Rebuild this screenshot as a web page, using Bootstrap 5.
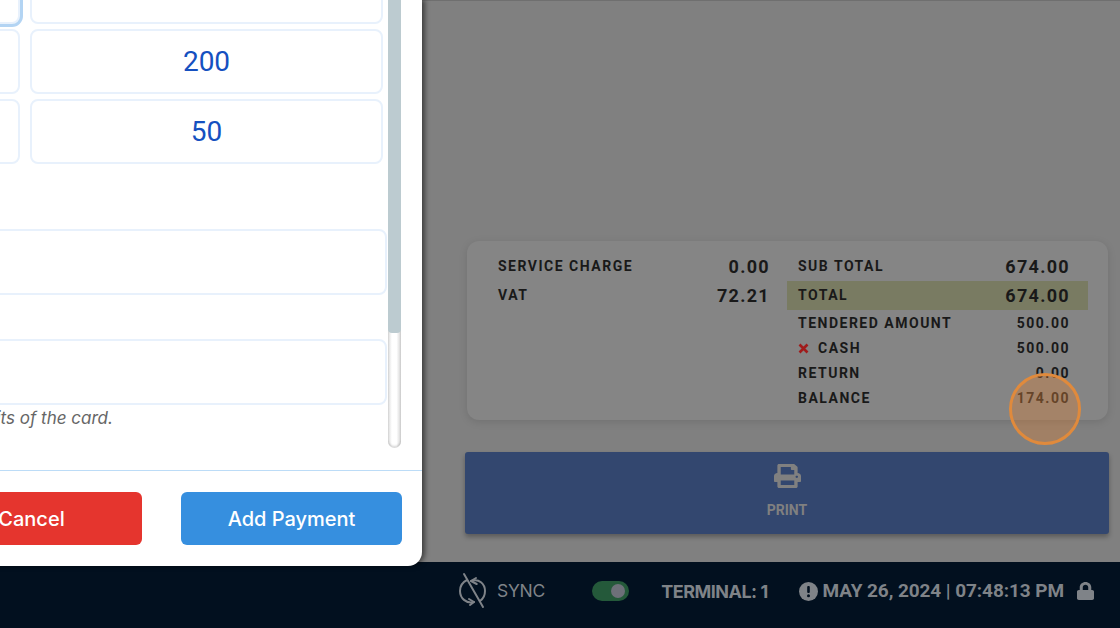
<!DOCTYPE html>
<html lang="en">
<head>
  <meta charset="UTF-8" />
  <meta name="viewport" content="width=device-width, initial-scale=1">
  <title>POS Payment</title>
  <link href="https://cdn.jsdelivr.net/npm/bootstrap@5.3.3/dist/css/bootstrap.min.css" rel="stylesheet">
  <style>
    html, body { height: 100%; overflow: hidden; }
    body { background: #808080; font-family: Roboto, sans-serif; }
    .pos-screen { height: 628px; position: relative; overflow: hidden; }
    .pos-main { height: 562px; padding: 0 11px 28px 465px; border-top: 1px solid #6f6f6f; }
    .sum-card { background: #858585; border-radius: 12px; margin: 0 1px 32px 2px; padding: 11px 38px 10px 31px; box-shadow: 0 2px 8px rgba(0,0,0,.12); color: #191919; display: grid; grid-template-columns: 272px 272px; column-gap: 28px; }
    .sum-row { height: 25px; font-size: 14px; font-weight: 700; letter-spacing: 1.5px; padding-top: 1px; }
    .sum-big { height: 29px; padding-top: 0; }
    .sum-big .sum-val { font-size: 18px; letter-spacing: 1.3px; }
    .sum-total { background: #797b62; margin: 0 -18px 0 -11px; padding: 0 18px 1px 11px; }
    .sum-late { color: #2a2a2a; }
    .sum-x { width: 11px; height: 11px; margin-right: 9px; }
    .print-btn { background: #33476f; height: 82px; border: 0; border-radius: 3px; color: #808080; font-size: 14px; font-weight: 700; box-shadow: 0 3px 5px rgba(0,0,0,.3); padding: 12px 0 0; }
    .print-btn:hover { background: #33476f; color: #808080; }
    .print-btn svg { width: 27px; height: 24px; }
    .print-btn span { margin-top: 12px; }
    .pos-foot { height: 66px; background: #02101f; color: #7f8388; padding: 0 26px 8px 459px; }
    .foot-sync { font-family: Inter, sans-serif; font-size: 17.5px; width: 134px; letter-spacing: -.3px; }
    .foot-sync svg { width: 28px; height: 32px; margin-right: 10px; flex: none; overflow: visible; }
    .foot-switch { width: 37px; height: 20px; background: #24593a; padding: 3px 4px; margin-right: 32px; }
    .foot-switch i { width: 14px; height: 14px; background: #6d7079; }
    .foot-term { font-family: Inter, sans-serif; font-weight: 700; font-size: 18px; letter-spacing: -.5px; width: 138px; white-space: nowrap; }
    .foot-date { font-weight: 700; font-size: 19px; letter-spacing: -.08px; white-space: nowrap; }
    .foot-date svg { width: 19px; height: 19px; margin-right: 5px; flex: none; }
    .foot-date .foot-lock { width: 17px; height: 18px; margin: 0 0 0 13px; }
    .pay-modal { position: absolute; left: -400px; top: 0; width: 822px; height: 566px; background: #fff; border-radius: 0 0 14px 14px; box-shadow: 3px 0 5px rgba(0,0,0,.5); overflow: hidden; }
    .pay-body { height: 470px; overflow: hidden; }
    .pay-scroll { width: 787px; margin-top: -41px; }
    .pay-keys { display: grid; grid-template-columns: 354px 353px; justify-content: end; gap: 5px 10px; padding-right: 4px; }
    .pay-key { height: 65px; background: #fff; border: 2px solid #e8f1fc; border-radius: 8px; color: #1550c0; font-size: 28px; padding: 0; }
    .pay-key:hover { background: #fff; color: #1550c0; border-color: #e8f1fc; }
    .pay-key.is-active { box-shadow: 0 0 0 3px #b3d4f3; }
    .pay-input { height: 66px; border: 2px solid #e8f1fc; border-radius: 8px; margin-top: 44px; }
    .pay-input.is-first { margin-top: 65px; }
    .pay-help { font-family: Inter, sans-serif; font-style: italic; font-size: 17px; color: #666; margin: 1px 0 0 245px; white-space: nowrap; }
    .pay-track { width: 13px; height: 448px; margin-left: 1px; border-radius: 0 0 7px 7px; background: linear-gradient(90deg, #ddd, #fff 30%, #fff 65%, #d5d5d5); box-shadow: inset 0 -2px 2px rgba(0,0,0,.15); }
    .pay-thumb { height: 333px; background: #bccbd0; border-radius: 0 0 4px 4px; }
    .pay-foot { height: 96px; border-top: 1px solid #bcdcf7; padding: 21px 20px 0 0; gap: 39px; }
    .pay-foot .btn { width: 221px; height: 53px; border: 0; border-radius: 6px; font-family: Inter, sans-serif; font-size: 20px; font-weight: 500; color: #fff; padding-top: 6px; }
    .btn-cancel, .btn-cancel:hover { background: #e5352e; }
    .btn-add, .btn-add:hover { background: #368fdf; }
    .click-ring { position: absolute; left: 1009px; top: 373px; width: 72px; height: 72px; border: 3px solid #e08a3c; border-radius: 50%; background: rgba(240,130,40,.3); }
  </style>
</head>
<body>
  <div class="pos-screen">
    <div class="pos-main d-flex flex-column justify-content-end">
      <div class="sum-card">
        <div>
          <div class="sum-row sum-big d-flex justify-content-between align-items-center"><span>SERVICE CHARGE</span><span class="sum-val">0.00</span></div>
          <div class="sum-row sum-big d-flex justify-content-between align-items-center"><span>VAT</span><span class="sum-val">72.21</span></div>
        </div>
        <div>
          <div class="sum-row sum-big d-flex justify-content-between align-items-center"><span>SUB TOTAL</span><span class="sum-val">674.00</span></div>
          <div class="sum-row sum-big sum-total d-flex justify-content-between align-items-center"><span>TOTAL</span><span class="sum-val">674.00</span></div>
          <div class="sum-row d-flex justify-content-between align-items-center"><span>TENDERED AMOUNT</span><span>500.00</span></div>
          <div class="sum-row d-flex justify-content-between align-items-center">
            <span class="d-flex align-items-center">
              <svg class="sum-x" viewBox="0 0 11 11"><path d="M1.5 1.5l8 8M9.5 1.5l-8 8" stroke="#a01c1c" stroke-width="2.6" fill="none"/></svg>CASH
            </span>
            <span>500.00</span>
          </div>
          <div class="sum-row d-flex justify-content-between align-items-center"><span>RETURN</span><span>0.00</span></div>
          <div class="sum-row d-flex justify-content-between align-items-center"><span>BALANCE</span><span class="sum-late">174.00</span></div>
        </div>
      </div>
      <button class="btn print-btn d-flex flex-column align-items-center">
        <svg viewBox="0 0 512 512" preserveAspectRatio="none"><path fill="currentColor" d="M448 192V77.25c0-8.49-3.37-16.62-9.37-22.63L393.37 9.37c-6-6-14.14-9.37-22.63-9.37H96C78.33 0 64 14.33 64 32v160c-35.35 0-64 28.65-64 64v112c0 8.84 7.16 16 16 16h48v96c0 17.67 14.33 32 32 32h320c17.67 0 32-14.33 32-32v-96h48c8.84 0 16-7.16 16-16V256c0-35.35-28.65-64-64-64zm-64 256H128v-96h256v96zm0-224H128V64h192v48c0 8.84 7.16 16 16 16h48v96zm48 72c-13.25 0-24-10.75-24-24 0-13.26 10.75-24 24-24s24 10.74 24 24c0 13.25-10.75 24-24 24z"/></svg>
        <span>PRINT</span>
      </button>
    </div>

    <div class="pos-foot d-flex align-items-center">
      <div class="foot-sync d-flex align-items-center">
        <svg viewBox="0 0 28 32" fill="none" stroke="currentColor" stroke-width="2" stroke-linecap="round" stroke-linejoin="round">
          <path d="M15 27C7 29 1 23 1 16C1 11 4 7 8 5"/>
          <path d="M10 24L15 27L11 30"/>
          <path d="M12 6C20 3 26 9 26 16C26 20 24 24 21 26"/>
          <path d="M17 3L12 6L17.700 9"/>
          <path d="M5 -1L24 32"/>
        </svg>
        <span>SYNC</span>
      </div>
      <div class="foot-switch rounded-pill d-flex justify-content-end"><i class="rounded-circle d-block"></i></div>
      <div class="foot-term">TERMINAL: 1</div>
      <div class="foot-date d-flex align-items-center">
        <svg viewBox="0 0 19 19"><circle cx="9.500" cy="9.500" r="9.500" fill="currentColor"/><rect x="8.200" y="4" width="2.600" height="7" rx="1" fill="#02101f"/><circle cx="9.500" cy="13.800" r="1.500" fill="#02101f"/></svg>
        <span>MAY 26, 2024 | 07:48:13 PM</span>
        <svg class="foot-lock" viewBox="0 0 448 512" preserveAspectRatio="none"><path fill="currentColor" d="M400 224h-24v-72C376 68.2 307.8 0 224 0S72 68.2 72 152v72H48c-26.500 0-48 21.500-48 48v192c0 26.500 21.500 48 48 48h352c26.500 0 48-21.500 48-48V272c0-26.500-21.500-48-48-48zm-104 0H152v-72c0-39.700 32.300-72 72-72s72 32.300 72 72v72z"/></svg>
      </div>
    </div>

    <div class="pay-modal d-flex flex-column">
      <div class="pay-body d-flex">
        <div class="pay-scroll">
          <div class="pay-keys">
            <button class="btn pay-key is-active" aria-label="Amount"></button>
            <button class="btn pay-key" aria-label="Amount"></button>
            <button class="btn pay-key" aria-label="Amount"></button>
            <button class="btn pay-key">200</button>
            <button class="btn pay-key" aria-label="Amount"></button>
            <button class="btn pay-key">50</button>
          </div>
          <input class="form-control pay-input is-first" type="text" aria-label="Reference">
          <input class="form-control pay-input" type="text" aria-label="Card digits">
          <div class="pay-help">Enter the last 4 digits of the card.</div>
        </div>
        <div class="pay-track"><div class="pay-thumb"></div></div>
      </div>
      <div class="pay-foot d-flex justify-content-end align-items-start">
        <button class="btn btn-cancel">Cancel</button>
        <button class="btn btn-add">Add Payment</button>
      </div>
    </div>

    <div class="click-ring"></div>
  </div>
  <script src="https://cdn.jsdelivr.net/npm/bootstrap@5.3.3/dist/js/bootstrap.bundle.min.js"></script>
</body>
</html>
